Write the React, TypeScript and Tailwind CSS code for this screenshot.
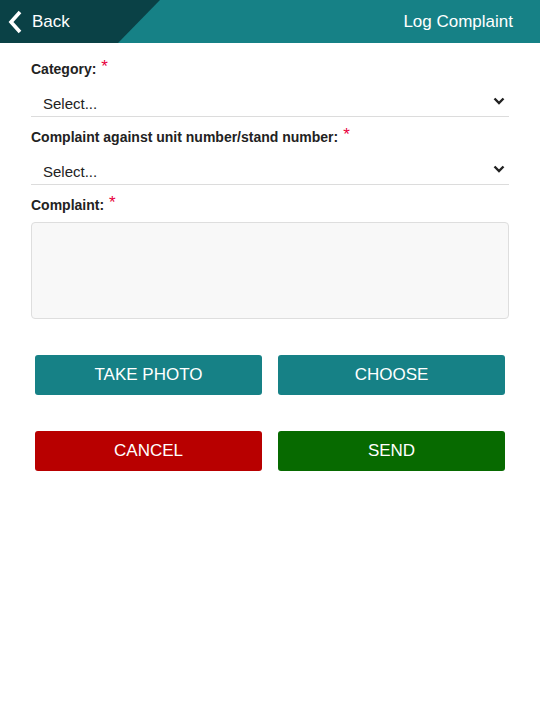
import React from "react";

function Chevron() {
  return (
    <svg width="12" height="8" viewBox="0 0 12 8" className="absolute right-[4px] top-[20px]">
      <polyline points="1.5,1.5 6,6 10.5,1.5" fill="none" stroke="#222" strokeWidth="2.4" />
    </svg>
  );
}

function Label({ text }: { text: string }) {
  return (
    <div className="flex items-start text-[14px] font-bold text-[#222] leading-[16px]">
      <span>{text}</span>
      <span className="ml-[5px] -mt-[2px] text-[17px] leading-[16px] font-normal text-[#e8003d]">*</span>
    </div>
  );
}

function SelectField() {
  return (
    <div className="relative h-[40px] border-b border-[#dcdcdc] pl-[12px] pt-[18px] text-[15px] text-[#222] leading-[18px]">
      Select...
      <Chevron />
    </div>
  );
}

export default function App() {
  return (
    <div className="w-[540px] h-[720px] bg-white" style={{ fontFamily: '"Liberation Sans", Arial, sans-serif' }}>
      <div className="flex h-[43px] bg-[#168186] text-white">
        <div className="flex items-center w-[160px] bg-[#0a4146] [clip-path:polygon(0_0,100%_0,calc(100%-42px)_100%,0_100%)]">
          <svg width="16" height="24" viewBox="0 0 16 24" className="ml-[7px]">
            <polyline points="13,2 4,12 13,22" fill="none" stroke="white" strokeWidth="3.6" />
          </svg>
          <span className="ml-[9px] text-[17px]">Back</span>
        </div>
        <div className="flex-1 flex items-center justify-end pr-[27px] text-[17px]">Log Complaint</div>
      </div>

      <div className="px-[31px] pt-[18px]">
        <Label text="Category:" />
        <SelectField />
        <div className="mt-[12px]">
          <Label text="Complaint against unit number/stand number:" />
        </div>
        <SelectField />
        <div className="mt-[12px]">
          <Label text="Complaint:" />
        </div>
        <div className="mt-[9px] h-[97px] rounded-[4px] border border-[#dedede] bg-[#f8f8f8]" />

        <div className="mt-[36px] px-[4px] grid grid-cols-2 gap-[16px]">
          <button className="h-[40px] rounded-[3px] bg-[#168186] text-white text-[17px]">TAKE PHOTO</button>
          <button className="h-[40px] rounded-[3px] bg-[#168186] text-white text-[17px]">CHOOSE</button>
        </div>
        <div className="mt-[36px] px-[4px] grid grid-cols-2 gap-[16px]">
          <button className="h-[40px] rounded-[3px] bg-[#b80000] text-white text-[17px]">CANCEL</button>
          <button className="h-[40px] rounded-[3px] bg-[#076a00] text-white text-[17px]">SEND</button>
        </div>
      </div>
    </div>
  );
}
